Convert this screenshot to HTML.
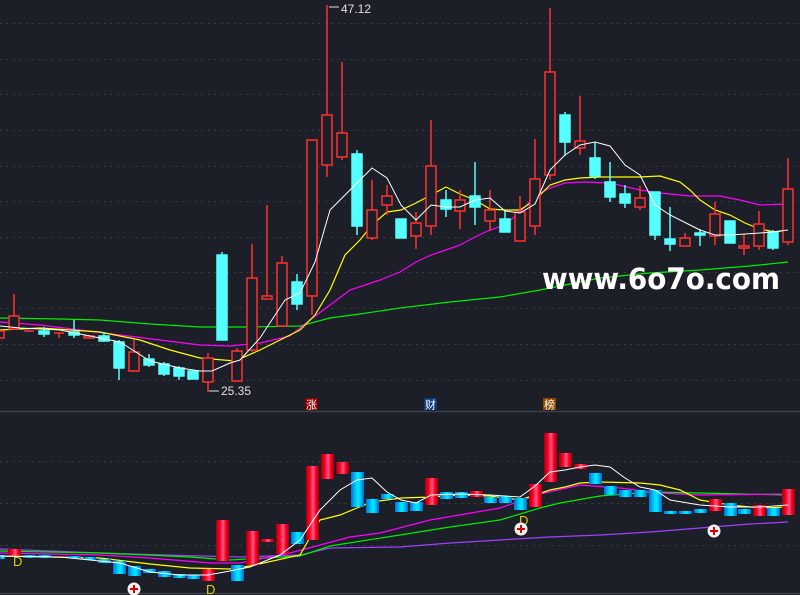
<!DOCTYPE html>
<html><head><meta charset="utf-8"><style>
html,body{margin:0;padding:0;background:#1c1f27;}
svg{display:block}
</style></head><body>
<svg width="800" height="595" viewBox="0 0 800 595" xmlns="http://www.w3.org/2000/svg" font-family="Liberation Sans, sans-serif">
<defs>
<linearGradient id="gr" x1="0" x2="1"><stop offset="0" stop-color="#a00010"/><stop offset="0.3" stop-color="#ff0020"/><stop offset="0.55" stop-color="#ff5a8a"/><stop offset="0.75" stop-color="#ff0020"/><stop offset="1" stop-color="#a00010"/></linearGradient>
<linearGradient id="gb" x1="0" x2="1"><stop offset="0" stop-color="#0070e0"/><stop offset="0.45" stop-color="#00e0ff"/><stop offset="0.6" stop-color="#00e8ff"/><stop offset="1" stop-color="#0068d8"/></linearGradient>
</defs>
<rect width="800" height="595" fill="#1c1f27"/>
<g stroke="#3e434d" stroke-width="1" stroke-dasharray="1.5 5">
<line x1="0" y1="23.5" x2="800" y2="23.5"/><line x1="0" y1="59.5" x2="800" y2="59.5"/><line x1="0" y1="94.5" x2="800" y2="94.5"/><line x1="0" y1="130.5" x2="800" y2="130.5"/><line x1="0" y1="166.5" x2="800" y2="166.5"/><line x1="0" y1="201.5" x2="800" y2="201.5"/><line x1="0" y1="237.5" x2="800" y2="237.5"/><line x1="0" y1="272.5" x2="800" y2="272.5"/><line x1="0" y1="308.5" x2="800" y2="308.5"/><line x1="0" y1="344.5" x2="800" y2="344.5"/><line x1="0" y1="380.5" x2="800" y2="380.5"/>
<line x1="0" y1="461.5" x2="800" y2="461.5"/><line x1="0" y1="503.5" x2="800" y2="503.5"/><line x1="0" y1="545.5" x2="800" y2="545.5"/>
</g>
<line x1="0" y1="411.5" x2="800" y2="411.5" stroke="#3c404a" stroke-width="1.5"/>
<line x1="0" y1="593.5" x2="800" y2="593.5" stroke="#3c404a" stroke-width="1.5"/>

<!-- MA lines top -->
<g fill="none" stroke-width="1.2">
<polyline stroke="#00ee00" points="0,318 60,319 100,320 150,324 200,327 250,327 300,326 330,318 360,314 400,308 450,302 500,297 540,290 560,286 600,278 650,273 700,270 750,266 788,262"/>
<polyline stroke="#ff00ff" points="0,322 40,325 80,330 120,335 160,340 200,345 230,346 260,343 290,336 310,320 330,305 350,290 380,280 400,272 416,262 431,255 446,250 460,245 475,237 490,230 505,225 520,212 535,196 550,188 565,183 585,182 610,183 640,190 660,193 690,196 720,196 740,200 760,205 788,204"/>
<polyline stroke="#ffff00" points="0,330 40,328 100,332 140,340 170,350 200,358 235,361 260,350 280,340 300,330 315,315 330,290 345,255 360,240 372,225 387,212 401,210 416,203 431,195 446,187 460,194 475,200 490,209 505,210 520,210 535,200 550,185 565,180 580,178 600,177 640,177 660,176 680,182 690,190 700,200 715,210 730,215 745,223 760,229 775,232 788,230"/>
</g>

<!-- candles -->
<g stroke-width="1.5">
<g stroke="#ff3030" fill="#1c1f27">
<line x1="14" y1="294" x2="14" y2="330"/><rect x="9" y="316" width="10" height="13"/>
<rect x="-4" y="331" width="8" height="7"/>
<line x1="29" y1="330" x2="29" y2="332"/><line x1="24" y1="331" x2="34" y2="331"/>
<line x1="59" y1="333" x2="59" y2="338"/><line x1="54" y1="333" x2="64" y2="333"/>
<line x1="89" y1="336" x2="89" y2="338"/><rect x="84" y="336" width="10" height="2"/>
<line x1="134" y1="340" x2="134" y2="372"/><rect x="129" y="352" width="10" height="19"/>
<line x1="208" y1="353" x2="208" y2="392"/><rect x="203" y="358" width="10" height="24"/>
<line x1="237" y1="348" x2="237" y2="381"/><rect x="232" y="351" width="10" height="30"/>
<line x1="252" y1="244" x2="252" y2="352"/><rect x="247" y="278" width="10" height="72"/>
<line x1="267" y1="205" x2="267" y2="299"/><rect x="262" y="296" width="10" height="3"/>
<line x1="282" y1="256" x2="282" y2="326"/><rect x="277" y="263" width="10" height="63"/>
<line x1="312" y1="140" x2="312" y2="315"/><rect x="307" y="140" width="10" height="156"/>
<line x1="327" y1="5" x2="327" y2="177"/><rect x="322" y="115" width="10" height="50"/>
<line x1="342" y1="62" x2="342" y2="160"/><rect x="337" y="133" width="10" height="24"/>
<line x1="372" y1="180" x2="372" y2="240"/><rect x="367" y="210" width="10" height="28"/>
<line x1="387" y1="185" x2="387" y2="215"/><rect x="382" y="196" width="10" height="9"/>
<line x1="416" y1="212" x2="416" y2="249"/><rect x="411" y="223" width="10" height="13"/>
<line x1="431" y1="120" x2="431" y2="235"/><rect x="426" y="166" width="10" height="60"/>
<line x1="460" y1="190" x2="460" y2="229"/><rect x="455" y="200" width="10" height="11"/>
<line x1="490" y1="190" x2="490" y2="231"/><rect x="485" y="210" width="10" height="11"/>
<line x1="520" y1="196" x2="520" y2="241"/><rect x="515" y="212" width="10" height="29"/>
<line x1="535" y1="139" x2="535" y2="235"/><rect x="530" y="179" width="10" height="47"/>
<line x1="550" y1="8" x2="550" y2="180"/><rect x="545" y="72" width="10" height="103"/>
<line x1="580" y1="96" x2="580" y2="155"/><rect x="575" y="141" width="10" height="7"/>
<line x1="640" y1="186" x2="640" y2="210"/><rect x="635" y="198" width="10" height="9"/>
<line x1="685" y1="233" x2="685" y2="246"/><rect x="680" y="238" width="10" height="8"/>
<line x1="715" y1="202" x2="715" y2="245"/><rect x="710" y="214" width="10" height="22"/>
<line x1="744" y1="234" x2="744" y2="255"/><rect x="739" y="246" width="10" height="2"/>
<line x1="759" y1="211" x2="759" y2="250"/><rect x="754" y="224" width="10" height="22"/>
<line x1="788" y1="158" x2="788" y2="245"/><rect x="783" y="189" width="10" height="53"/>
</g>
<g stroke="#55ffff" fill="#55ffff">
<line x1="44" y1="327" x2="44" y2="337"/><rect x="39" y="331" width="10" height="3"/>
<line x1="74" y1="320" x2="74" y2="338"/><rect x="69" y="332" width="10" height="3"/>
<line x1="104" y1="332" x2="104" y2="342"/><rect x="99" y="336" width="10" height="5"/>
<line x1="119" y1="340" x2="119" y2="380"/><rect x="114" y="342" width="10" height="26"/>
<line x1="149" y1="354" x2="149" y2="367"/><rect x="144" y="359" width="10" height="6"/>
<line x1="164" y1="362" x2="164" y2="376"/><rect x="159" y="364" width="10" height="10"/>
<line x1="179" y1="366" x2="179" y2="380"/><rect x="174" y="368" width="10" height="8"/>
<rect x="188" y="371" width="10" height="8"/>
<line x1="222" y1="252" x2="222" y2="340"/><rect x="217" y="255" width="10" height="85"/>
<line x1="297" y1="274" x2="297" y2="310"/><rect x="292" y="282" width="10" height="22"/>
<line x1="357" y1="150" x2="357" y2="235"/><rect x="352" y="154" width="10" height="72"/>
<rect x="396" y="219" width="10" height="19"/>
<line x1="446" y1="190" x2="446" y2="217"/><rect x="441" y="200" width="10" height="9"/>
<line x1="475" y1="162" x2="475" y2="225"/><rect x="470" y="196" width="10" height="11"/>
<line x1="505" y1="211" x2="505" y2="232"/><rect x="500" y="219" width="10" height="13"/>
<line x1="565" y1="112" x2="565" y2="156"/><rect x="560" y="115" width="10" height="27"/>
<line x1="595" y1="142" x2="595" y2="179"/><rect x="590" y="158" width="10" height="18"/>
<line x1="610" y1="162" x2="610" y2="202"/><rect x="605" y="182" width="10" height="15"/>
<line x1="625" y1="185" x2="625" y2="208"/><rect x="620" y="194" width="10" height="9"/>
<line x1="655" y1="192" x2="655" y2="240"/><rect x="650" y="192" width="10" height="43"/>
<line x1="670" y1="207" x2="670" y2="251"/><rect x="665" y="239" width="10" height="5"/>
<line x1="700" y1="229" x2="700" y2="246"/><rect x="695" y="233" width="10" height="2"/>
<rect x="725" y="221" width="10" height="22"/>
<line x1="773" y1="230" x2="773" y2="250"/><rect x="768" y="232" width="10" height="16"/>
</g>
</g>
<polyline fill="none" stroke="#ffffff" stroke-width="1" points="0,326 20,328 60,330 100,338 120,342 150,361 180,368 200,371 212,371 230,363 240,360 260,338 285,300 300,293 315,262 330,210 345,195 360,180 372,168 387,178 401,205 416,220 431,205 446,207 460,207 475,200 490,198 505,211 520,213 535,204 550,170 565,155 580,145 595,142 610,146 625,165 640,175 655,205 670,215 690,225 700,230 715,235 730,235 745,234 760,233 772,232 788,230"/>

<text x="341" y="13" fill="#e0e0e0" font-size="12">47.12</text>
<line x1="329" y1="7" x2="339" y2="7" stroke="#e0e0e0"/>
<text x="221" y="395" fill="#e0e0e0" font-size="12">25.35</text>
<line x1="209" y1="391" x2="219" y2="391" stroke="#e0e0e0"/>

<rect x="305" y="398" width="13" height="12" fill="#8a0000"/><text x="311.5" y="408.5" fill="#fff" font-size="11" text-anchor="middle" font-family="Noto Sans CJK SC, sans-serif">涨</text>
<rect x="424" y="398" width="13" height="12" fill="#0a3a78"/><text x="430.5" y="408.5" fill="#fff" font-size="11" text-anchor="middle" font-family="Noto Sans CJK SC, sans-serif">财</text>
<rect x="543" y="398" width="13" height="12" fill="#8a4a00"/><text x="549.5" y="408.5" fill="#fff" font-size="11" text-anchor="middle" font-family="Noto Sans CJK SC, sans-serif">榜</text>

<text x="542" y="289" fill="#ffffff" font-size="29" font-weight="bold" font-family="DejaVu Sans, sans-serif" textLength="238" lengthAdjust="spacingAndGlyphs">www.6o7o.com</text>

<!-- bottom lines -->
<g fill="none" stroke-width="1.2">
<polyline stroke="#a040ff" points="0,549 100,553 200,556 240,557 300,555 330,548 400,547 450,543 500,540 550,537 600,535 650,532 700,528 750,524 788,522"/>
<polyline stroke="#00ee00" points="0,551 100,553 190,557 230,560 300,556 330,546 400,535 450,527 500,520 540,508 560,503 600,496 650,492 700,493 788,495"/>
<polyline stroke="#ff00ff" points="0,553 100,555 150,558 210,563 240,563 290,553 320,545 350,537 380,533 430,520 500,508 540,494 580,485 620,488 660,493 700,495 788,494"/>
<polyline stroke="#ffff00" points="0,556 100,558 150,564 190,568 230,569 250,566 300,555 320,520 340,515 357,508 372,502 401,498 431,497 460,495 490,496 505,498 520,500 535,495 550,490 565,487 580,483 600,482 640,483 660,485 680,490 700,500 730,505 760,508 788,507"/>
</g>
<g>
<g fill="url(#gr)">
<rect x="8" y="549" width="13" height="7"/><rect x="202" y="569" width="13" height="12"/><rect x="216" y="520" width="13" height="41"/><rect x="246" y="531" width="13" height="34"/><rect x="261" y="539" width="13" height="3"/><rect x="276" y="524" width="13" height="30"/><rect x="306" y="466" width="13" height="74"/><rect x="321" y="454" width="13" height="25"/><rect x="336" y="462" width="13" height="12"/><rect x="425" y="478" width="13" height="27"/><rect x="470" y="491" width="13" height="6"/><rect x="529" y="484" width="13" height="23"/><rect x="544" y="433" width="13" height="49"/><rect x="559" y="453" width="13" height="14"/><rect x="574" y="464" width="13" height="5"/><rect x="709" y="499" width="13" height="12"/><rect x="753" y="505" width="13" height="11"/><rect x="782" y="489" width="13" height="26"/>
</g>
<g fill="url(#gb)">
<rect x="0" y="555" width="5" height="4"/><rect x="23" y="555" width="13" height="3"/><rect x="38" y="555" width="13" height="3"/><rect x="68" y="556" width="13" height="2"/><rect x="83" y="557" width="13" height="3"/><rect x="98" y="559" width="13" height="4"/><rect x="113" y="561" width="13" height="13"/><rect x="128" y="566" width="13" height="10"/><rect x="143" y="569" width="13" height="4"/><rect x="158" y="571" width="13" height="6"/><rect x="173" y="574" width="13" height="4"/><rect x="187" y="575" width="13" height="4"/><rect x="231" y="565" width="13" height="16"/><rect x="291" y="532" width="13" height="12"/><rect x="351" y="472" width="13" height="35"/><rect x="366" y="499" width="13" height="14"/><rect x="381" y="494" width="13" height="5"/><rect x="395" y="502" width="13" height="10"/><rect x="410" y="502" width="13" height="9"/><rect x="440" y="492" width="13" height="7"/><rect x="455" y="492" width="13" height="6"/><rect x="484" y="497" width="13" height="6"/><rect x="499" y="496" width="13" height="7"/><rect x="514" y="498" width="13" height="12"/><rect x="589" y="473" width="13" height="11"/><rect x="604" y="486" width="13" height="9"/><rect x="619" y="490" width="13" height="7"/><rect x="634" y="490" width="13" height="7"/><rect x="649" y="490" width="13" height="22"/><rect x="664" y="511" width="13" height="3"/><rect x="679" y="511" width="13" height="3"/><rect x="694" y="509" width="13" height="4"/><rect x="724" y="503" width="13" height="13"/><rect x="738" y="509" width="13" height="5"/><rect x="767" y="508" width="13" height="8"/>
</g>
</g>
<polyline fill="none" stroke="#ffffff" stroke-width="1" points="0,556 60,557 120,563 150,572 180,575 208,575 230,571 250,567 280,555 300,540 320,510 340,490 357,480 372,478 387,492 401,500 416,503 431,495 460,494 490,495 520,497 535,486 550,472 565,470 580,467 595,465 610,467 625,478 640,487 655,490 670,500 700,505 730,507 760,507 788,505"/>

<g fill="#e0d000" font-size="13" font-family="Liberation Sans, sans-serif">
<text x="13" y="566">D</text><text x="206" y="594">D</text><text x="519" y="525">D</text>
</g>
<g>
<circle cx="134" cy="589" r="6.5" fill="#f2f2f2"/><path d="M130 589h8M134 585v8" stroke="#e00000" stroke-width="2"/>
<circle cx="521" cy="529" r="6.5" fill="#f2f2f2"/><path d="M517 529h8M521 525v8" stroke="#e00000" stroke-width="2"/>
<circle cx="714" cy="531" r="6.5" fill="#f2f2f2"/><path d="M710 531h8M714 527v8" stroke="#e00000" stroke-width="2"/>
</g>
</svg>
</body></html>
